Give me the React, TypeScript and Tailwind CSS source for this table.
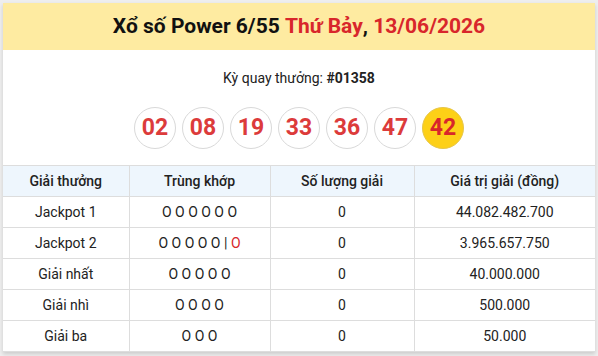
import React from 'react';

type Row = {
  name: string;
  match: string;
  extra?: boolean;
  count: string;
  value: string;
};

const BALLS = ['02', '08', '19', '33', '36', '47'];
const SPECIAL = '42';

const ROWS: Row[] = [
  { name: 'Jackpot 1', match: 'O O O O O O', count: '0', value: '44.082.482.700' },
  { name: 'Jackpot 2', match: 'O O O O O', extra: true, count: '0', value: '3.965.657.750' },
  { name: 'Giải nhất', match: 'O O O O O', count: '0', value: '40.000.000' },
  { name: 'Giải nhì', match: 'O O O O', count: '0', value: '500.000' },
  { name: 'Giải ba', match: 'O O O', count: '0', value: '50.000' },
];

const cell = 'border border-[#dddddd] text-center align-middle';

export default function App() {
  return (
    <div
      className="w-[598px] h-[356px] bg-[#eeeeee] p-[3px] overflow-hidden"
      style={{ fontFamily: 'Roboto, "Noto Sans", sans-serif' }}
    >
      <div className="bg-white h-[349px] overflow-hidden shadow-[0_2px_4px_rgba(0,0,0,0.15)]">
        <div className="h-[47px] bg-[#feeba1] flex items-center justify-center text-[21px] font-bold text-[#111]">
          <span>Xổ số Power 6/55&nbsp;</span>
          <span className="text-[#d8262b]">Thứ Bảy</span>
          <span>,&nbsp;</span>
          <span className="text-[#d8262b]">13/06/2026</span>
        </div>

        <div className="pt-[18px] text-center text-[14px] text-[#222] leading-[20px]">
          Kỳ quay thưởng: <span className="font-bold">#01358</span>
        </div>

        <div className="mt-[19px] flex justify-center gap-[6px]">
          {BALLS.map((b) => (
            <div
              key={b}
              className="w-[42px] h-[42px] rounded-full border-[1.5px] border-[#d9d9d9] bg-white flex items-center justify-center text-[23px] font-bold text-[#dc3b3b]"
            >
              {b}
            </div>
          ))}
          <div className="w-[42px] h-[42px] rounded-full border-[1.5px] border-[#e6c64a] bg-[#fdd017] flex items-center justify-center text-[23px] font-bold text-[#d8262b]">
            {SPECIAL}
          </div>
        </div>

        <table className="mt-[16px] w-full border-collapse text-[14px] text-[#222] table-fixed">
          <colgroup>
            <col className="w-[126px]" />
            <col className="w-[141px]" />
            <col className="w-[144px]" />
            <col />
          </colgroup>
          <thead>
            <tr className="h-[31px] bg-[#eef6fd]">
              <th className={`${cell} font-medium border-l-0`}>Giải thưởng</th>
              <th className={`${cell} font-medium`}>Trùng khớp</th>
              <th className={`${cell} font-medium`}>Số lượng giải</th>
              <th className={`${cell} font-medium border-r-0`}>Giá trị giải (đồng)</th>
            </tr>
          </thead>
          <tbody>
            {ROWS.map((r) => (
              <tr key={r.name} className="h-[31px]">
                <td className={`${cell} border-l-0`}>{r.name}</td>
                <td className={cell}>
                  {r.match}
                  {r.extra && (
                    <>
                      {' | '}
                      <span className="text-[#d8262b]">O</span>
                    </>
                  )}
                </td>
                <td className={cell}>{r.count}</td>
                <td className={`${cell} border-r-0`}>{r.value}</td>
              </tr>
            ))}
          </tbody>
        </table>
      </div>
    </div>
  );
}
